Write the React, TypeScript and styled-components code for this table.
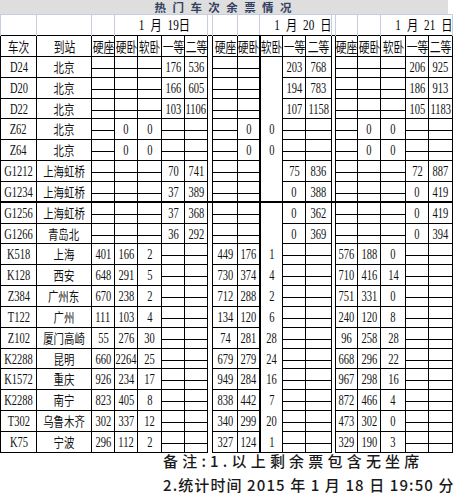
import React from 'react';
import styled, { createGlobalStyle, css } from 'styled-components';

const Global = createGlobalStyle`
  html, body { margin: 0; padding: 0; background: #fff; }
  body { font-family: "Liberation Serif", "Noto Sans CJK SC", serif; color: #000; }
`;

const LIGHT = '#c4cedd';
const LINE = '1px solid #000';

const Page = styled.div`
  width: 454px;
  height: 497px;
  overflow: hidden;
  display: flex;
  flex-direction: column;
`;

const TitleBar = styled.div`
  box-sizing: border-box;
  width: 448px;
  height: 14px;
  padding-top: 1px;
  background: #dedede;
  text-align: center;
  font-family: "Noto Sans CJK SC", sans-serif;
  font-weight: 700;
  font-size: 11.5px;
  line-height: 13px;
  letter-spacing: 1.9px;
  color: #34405f;
  white-space: pre;
`;

const Table = styled.table`
  border-collapse: collapse;
  table-layout: fixed;
  width: 452px;
`;

const Col = styled.col<{ $w: number }>`
  width: ${(p) => p.$w}px;
`;

const Row = styled.tr<{ $h: number }>`
  height: ${(p) => p.$h}px;
`;

const DateCell = styled.td<{ $pr?: number }>`
  padding: 0 ${(p) => p.$pr ?? 0}px 0 0;
  border-top: 1px solid ${LIGHT};
  border-left: 1px solid ${LIGHT};
  border-right: 1px solid ${LIGHT};
  border-bottom: none;
  text-align: right;
  vertical-align: middle;
  white-space: nowrap;
`;

const DateText = styled.span`
  display: inline-block;
  font-family: "Liberation Serif", "Noto Sans CJK SC", serif;
  font-size: 14px;
  line-height: 16px;
  word-spacing: 4px;
  transform: scaleX(0.8);
  transform-origin: right center;
  white-space: pre;
`;

const HeadCell = styled.td<{ $thickLeft?: boolean }>`
  padding: 0;
  border: ${LINE};
  ${(p) => p.$thickLeft && css`border-left: 2px solid #000;`}
  vertical-align: middle;
  overflow: hidden;
`;

const GapCell = styled.td<{ $top?: 'thin' | 'thick' }>`
  padding: 0;
  border-left: ${LINE};
  border-right: ${LINE};
  border-top: ${(p) => (p.$top === 'thin' ? LINE : p.$top === 'thick' ? '2px solid #000' : 'none')};
  border-bottom: none;
`;

const DataCell = styled.td<{
  $thickTop?: boolean;
  $thickLeft?: boolean;
  $noH?: boolean;
  $last?: boolean;
}>`
  padding: 0;
  border: ${LINE};
  vertical-align: middle;
  ${(p) => p.$noH && css`border-top: none; border-bottom: none;`}
  ${(p) => p.$thickTop && css`border-top: 2px solid #000;`}
  ${(p) => p.$thickLeft && css`border-left: 2px solid #000;`}
  ${(p) => p.$last && css`border-bottom: 1px solid #000;`}
`;

const Dash = styled.div`
  height: 1px;
  margin-top: 3px;
  background: #000;
`;

const Center = styled.div`
  display: flex;
  justify-content: center;
  align-items: center;
  white-space: nowrap;
`;

const Num = styled.span`
  display: inline-block;
  font-family: "Liberation Serif", serif;
  font-size: 15px;
  line-height: 16px;
  transform: scaleX(0.7);
  color: #111;
`;

const Cjk = styled.span<{ $size?: number }>`
  display: inline-block;
  font-family: "Noto Sans CJK SC", sans-serif;
  font-size: ${(p) => p.$size ?? 13}px;
  line-height: 16px;
  transform: scaleX(0.8);
  color: #111;
`;

const Notes = styled.div`
  margin-top: -4px;
  padding-left: 163px;
  display: flex;
  flex-direction: column;
  font-family: "Noto Sans CJK SC", sans-serif;
  font-size: 15px;
  font-weight: 500;
  line-height: 24px;
  color: #1a1a1a;
`;

const NoteLine = styled.div<{ $ls: number }>`
  letter-spacing: ${(p) => p.$ls}px;
  white-space: pre;
`;

const widths = [36, 55, 23, 23, 24, 23, 23, 5, 25, 22, 23, 23, 26, 4, 22, 23, 25, 23, 24];

type V = string;

const trains: [string, string][] = [
  ['D24', '北京'],
  ['D20', '北京'],
  ['D22', '北京'],
  ['Z62', '北京'],
  ['Z64', '北京'],
  ['G1212', '上海虹桥'],
  ['G1234', '上海虹桥'],
  ['G1256', '上海虹桥'],
  ['G1266', '青岛北'],
  ['K518', '上海'],
  ['K128', '西安'],
  ['Z384', '广州东'],
  ['T122', '广州'],
  ['Z102', '厦门高崎'],
  ['K2288', '昆明'],
  ['K1572', '重庆'],
  ['K2288', '南宁'],
  ['T302', '乌鲁木齐'],
  ['K75', '宁波'],
];

const sec1: V[][] = [
  ['-', '-', '-', '176', '536'],
  ['-', '-', '-', '166', '605'],
  ['-', '-', '-', '103', '1106'],
  ['-', '0', '0', '-', '-'],
  ['-', '0', '0', '-', '-'],
  ['-', '-', '-', '70', '741'],
  ['-', '-', '-', '37', '389'],
  ['-', '-', '-', '37', '368'],
  ['-', '-', '-', '36', '292'],
  ['401', '166', '2', '-', '-'],
  ['648', '291', '5', '-', '-'],
  ['670', '238', '2', '-', '-'],
  ['111', '103', '4', '-', '-'],
  ['55', '276', '30', '-', '-'],
  ['660', '2264', '25', '-', '-'],
  ['926', '234', '17', '-', '-'],
  ['823', '405', '8', '-', '-'],
  ['302', '337', '12', '-', '-'],
  ['296', '112', '2', '-', '-'],
];

const sec2: V[][] = [
  ['-', '-', '', '203', '768'],
  ['-', '-', '', '194', '783'],
  ['-', '-', '', '107', '1158'],
  ['-', '0', '0', '-', '-'],
  ['-', '0', '0', '-', '-'],
  ['-', '-', '', '75', '836'],
  ['-', '-', '', '0', '388'],
  ['-', '-', '', '0', '362'],
  ['-', '-', '', '0', '369'],
  ['449', '176', '1', '-', '-'],
  ['730', '374', '4', '-', '-'],
  ['712', '288', '2', '-', '-'],
  ['134', '120', '6', '-', '-'],
  ['74', '281', '28', '-', '-'],
  ['679', '279', '24', '-', '-'],
  ['949', '284', '16', '-', '-'],
  ['838', '442', '7', '-', '-'],
  ['340', '299', '20', '-', '-'],
  ['327', '124', '1', '-', '-'],
];

const sec3: V[][] = [
  ['-', '-', '-', '206', '925'],
  ['-', '-', '-', '186', '913'],
  ['-', '-', '-', '105', '1183'],
  ['-', '0', '0', '-', '-'],
  ['-', '0', '0', '-', '-'],
  ['-', '-', '-', '72', '887'],
  ['-', '-', '-', '0', '419'],
  ['-', '-', '-', '0', '419'],
  ['-', '-', '-', '0', '394'],
  ['576', '188', '0', '-', '-'],
  ['710', '416', '14', '-', '-'],
  ['751', '331', '0', '-', '-'],
  ['240', '120', '8', '-', '-'],
  ['96', '258', '28', '-', '-'],
  ['668', '296', '22', '-', '-'],
  ['967', '298', '16', '-', '-'],
  ['872', '466', '4', '-', '-'],
  ['473', '302', '0', '-', '-'],
  ['329', '190', '3', '-', '-'],
];

const heads = ['硬座', '硬卧', '软卧', '一等', '二等'];
const THICK_ROW = 7;

function Section({ vals, row, sec }: { vals: V[]; row: number; sec: number }) {
  const last = row === trains.length - 1;
  return (
    <>
      {vals.map((v, i) => {
        const noH = sec === 2 && i === 2;
        return (
          <DataCell key={i} $noH={noH} $thickLeft={noH} $thickTop={row === THICK_ROW} $last={last}>
            {v === '-' ? (
              <Dash />
            ) : v !== '' ? (
              <Center>
                <Num>{v}</Num>
              </Center>
            ) : null}
          </DataCell>
        );
      })}
    </>
  );
}

function HeadGroup({ sec }: { sec: number }) {
  return (
    <>
      {heads.map((h, i) => (
        <HeadCell key={h} $thickLeft={sec === 2 && i === 2}>
          <Center>
            <Cjk $size={13.5}>{h}</Cjk>
          </Center>
        </HeadCell>
      ))}
    </>
  );
}

export default function App() {
  return (
    <>
      <Global />
      <Page>
        <TitleBar>热 门 车 次 余 票 情 况</TitleBar>
        <Table>
          <colgroup>
            {widths.map((w, i) => (
              <Col key={i} $w={w} />
            ))}
          </colgroup>
          <tbody>
            <Row $h={21}>
              <DateCell />
              <DateCell />
              <DateCell />
              <DateCell colSpan={4} $pr={17}>
                <DateText>1 月 19日</DateText>
              </DateCell>
              <DateCell />
              <DateCell />
              <DateCell />
              <DateCell colSpan={3} $pr={2}>
                <DateText>1 月 20 日</DateText>
              </DateCell>
              <DateCell />
              <DateCell />
              <DateCell />
              <DateCell colSpan={3} $pr={1}>
                <DateText>1 月 21 日</DateText>
              </DateCell>
            </Row>
            <Row $h={21}>
              <HeadCell>
                <Center>
                  <Cjk $size={13.5}>车次</Cjk>
                </Center>
              </HeadCell>
              <HeadCell>
                <Center>
                  <Cjk $size={13.5}>到站</Cjk>
                </Center>
              </HeadCell>
              <HeadGroup sec={1} />
              <GapCell $top="thin" />
              <HeadGroup sec={2} />
              <GapCell $top="thin" />
              <HeadGroup sec={3} />
            </Row>
            {trains.map(([code, dest], r) => {
              const thick = r === THICK_ROW;
              const last = r === trains.length - 1;
              return (
                <Row $h={20.84} key={r}>
                  <DataCell $thickTop={thick} $last={last}>
                    <Center>
                      <Num>{code}</Num>
                    </Center>
                  </DataCell>
                  <DataCell $thickTop={thick} $last={last}>
                    <Center>
                      <Cjk>{dest}</Cjk>
                    </Center>
                  </DataCell>
                  <Section vals={sec1[r]} row={r} sec={1} />
                  <GapCell $top={thick ? 'thick' : undefined} />
                  <Section vals={sec2[r]} row={r} sec={2} />
                  <GapCell $top={thick ? 'thick' : undefined} />
                  <Section vals={sec3[r]} row={r} sec={3} />
                </Row>
              );
            })}
          </tbody>
        </Table>
        <Notes>
          <NoteLine $ls={4.2}>备注:1.以上剩余票包含无坐席</NoteLine>
          <NoteLine $ls={1.1}>2.统计时间 2015 年 1 月 18 日 19:50 分</NoteLine>
        </Notes>
      </Page>
    </>
  );
}
